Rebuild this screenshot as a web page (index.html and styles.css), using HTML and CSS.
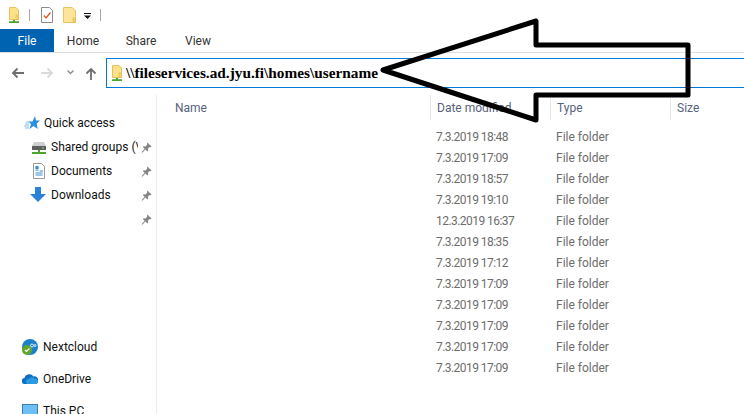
FILE: index.html
```html
<!DOCTYPE html>
<html lang="en">
<head>
<meta charset="utf-8">
<title>File Explorer</title>
<link rel="stylesheet" href="styles.css">
</head>
<body>
<svg width="0" height="0" class="defs">
  <defs>
    <symbol id="netfolder" viewBox="0 0 10 16">
      <path d="M.5 .5h6.500l2.500 2.500v9.500h-9z" fill="#fde188" stroke="#e3c25f"/>
      <rect x="7" y="8" width="2.500" height="4.500" fill="#f7d56c" stroke="#dcb64d" stroke-width=".6"/>
      <path d="M4 13h2v1.300h4V16H0v-1.700h4z" fill="#4aa52e"/>
    </symbol>
    <symbol id="pin" viewBox="0 0 12 12">
      <path d="M7 .5l4.500 4.500-1 .7-1-.3-2 2 .3 2-1 .9-2-2-3.300 3.500-.8-.8L4 7.500l-2-2 .9-1 2 .3 2-2-.3-1z" fill="#858585"/>
    </symbol>
  </defs>
</svg>
<div class="window">
  <div class="qat">
    <svg class="qat-net"><use href="#netfolder"/></svg>
    <span class="qat-sep"></span>
    <svg class="qat-doc" viewBox="0 0 12 16">
      <path d="M.5.500h8l3 3v12H.5z" fill="#fff" stroke="#8c8c8c"/>
      <path d="M3 8.500l2 2.500L9.500 5.500" fill="none" stroke="#e0562a" stroke-width="1.300"/>
    </svg>
    <svg class="qat-folder" viewBox="0 0 13 16">
      <path d="M.5.500h8.500l3.500 3v12H.5z" fill="#fde49a" stroke="#e6c563"/>
      <rect x="10" y="11" width="2.500" height="4.500" fill="#f4d06a" stroke="#dcb64d" stroke-width=".6"/>
    </svg>
    <svg class="qat-drop" viewBox="0 0 7 6">
      <rect width="7" height="1" fill="#111"/>
      <path d="M0 2.500h7L3.500 6z" fill="#111"/>
    </svg>
    <span class="qat-sep qat-sep-last"></span>
  </div>
  <div class="ribbon">
    <span class="tab tab-file">File</span>
    <span class="tab tab-home">Home</span>
    <span class="tab tab-share">Share</span>
    <span class="tab tab-view">View</span>
  </div>
  <div class="navbar">
    <svg class="nav-icon nav-back" viewBox="0 0 13 12"><path d="M13 6H2M6.500 1.500L2 6l4.500 4.500" fill="none" stroke="#6e6e6e" stroke-width="1.800"/></svg>
    <svg class="nav-icon nav-fwd" viewBox="0 0 13 12"><path d="M0 6h11M6.500 1.500L11 6l-4.500 4.500" fill="none" stroke="#d9d9d9" stroke-width="1.800"/></svg>
    <svg class="nav-chev" viewBox="0 0 7 5"><path d="M.5 .5L3.500 3.500 6.500 .5" fill="none" stroke="#8a8a8a" stroke-width="1.300"/></svg>
    <svg class="nav-icon nav-up" viewBox="0 0 12 13"><path d="M6 13V2M1.500 6.500L6 2l4.500 4.500" fill="none" stroke="#6e6e6e" stroke-width="1.800"/></svg>
    <div class="address">
      <svg class="addr-icon"><use href="#netfolder"/></svg>
      <span class="addr-text">\\fileservices.ad.jyu.fi\homes\username</span>
    </div>
  </div>
  <div class="content">
    <nav class="sidebar">
      <div class="nav-group">
        <div class="nav-item nav-top">
          <svg class="ico-star" viewBox="0 0 16 14">
            <path d="M11 0l1 4.500h4l-3.300 3 1 5.500-4.200-3L5.500 13l1.500-5L4.500 5.500h4z" fill="#2a8fdc"/>
            <path d="M0 10h5M1 8h4M2 6h3M1 12h4" stroke="#7fbdea" stroke-width="1"/>
          </svg>
          <span>Quick access</span>
        </div>
        <div class="nav-item nav-sub">
          <svg class="ico-sub" viewBox="0 0 16 16">
            <path d="M3 3h10l2 4v3H1V7z" fill="#cfcfcf"/>
            <rect x="1" y="7" width="14" height="4" fill="#5e5e5e"/>
            <rect x="11" y="8.500" width="2" height="1" fill="#7ee06a"/>
            <path d="M7 11h2v2h6v2H1v-2h6z" fill="#4aa52e"/>
          </svg>
          <span>Shared groups (\</span>
          <svg class="pin"><use href="#pin"/></svg>
        </div>
        <div class="nav-item nav-sub">
          <svg class="ico-sub" viewBox="0 0 16 16">
            <path d="M2.500.5h8l3 3v12h-11z" fill="#fff" stroke="#9a9a9a"/>
            <path d="M4.500 5h3M4.500 7h3M8.500 8h3.500M4.500 10h7M4.500 12h7" stroke="#3a8fd0"/>
            <rect x="4.500" y="3" width="3" height="3" fill="#3a8fd0"/>
          </svg>
          <span>Documents</span>
          <svg class="pin"><use href="#pin"/></svg>
        </div>
        <div class="nav-item nav-sub">
          <svg class="ico-sub ico-down" viewBox="0 0 16 16">
            <path d="M5 0h6v7h5l-8 8-8-8h5z" fill="#2b82d9"/>
          </svg>
          <span>Downloads</span>
          <svg class="pin"><use href="#pin"/></svg>
        </div>
        <div class="nav-item nav-sub">
          <span class="ico-sub"></span>
          <span></span>
          <svg class="pin"><use href="#pin"/></svg>
        </div>
      </div>
      <div class="nav-group-low">
        <div class="nav-item nav-low">
          <svg class="ico-low" viewBox="0 0 16 16">
            <circle cx="8" cy="8" r="8" fill="#1b82c9"/>
            <circle cx="5" cy="11" r="5" fill="#62a52c"/>
            <path d="M3 11l1.500 1.500L7.500 9.500" fill="none" stroke="#fff" stroke-width="1.200"/>
            <circle cx="10" cy="6.500" r="1.500" fill="none" stroke="#d6eefc"/>
            <circle cx="13" cy="6.500" r="1" fill="none" stroke="#d6eefc"/>
          </svg>
          <span>Nextcloud</span>
        </div>
        <div class="nav-item nav-low">
          <svg class="ico-low" viewBox="0 0 16 16">
            <path d="M3 13a3 3 0 0 1-.500-6 5 5 0 0 1 9-1.500A3.600 3.600 0 0 1 16 10c0 1.700-1 3-2.500 3z" fill="#0f6fc0"/>
            <path d="M6 13a2.500 2.500 0 0 1 .5-5 4 4 0 0 1 6-.5A3 3 0 0 1 16 10.500c0 1.500-1 2.500-2.500 2.500z" fill="#2a9be0"/>
          </svg>
          <span>OneDrive</span>
        </div>
        <div class="nav-item nav-low">
          <svg class="ico-low" viewBox="0 0 16 16">
            <rect x=".5" y="1.500" width="15" height="11" fill="#6cc0f5" stroke="#3f7fae"/>
          </svg>
          <span>This PC</span>
        </div>
      </div>
    </nav>
    <main class="files">
      <div class="row header">
        <span class="col-name">Name</span>
        <span class="col">Date modified</span>
        <span class="col">Type</span>
        <span class="col">Size</span>
      </div>
      <div class="row"><span></span><span class="cell date">7.3.2019 18:48</span><span class="cell">File folder</span></div>
      <div class="row"><span></span><span class="cell date">7.3.2019 17:09</span><span class="cell">File folder</span></div>
      <div class="row"><span></span><span class="cell date">7.3.2019 18:57</span><span class="cell">File folder</span></div>
      <div class="row"><span></span><span class="cell date">7.3.2019 19:10</span><span class="cell">File folder</span></div>
      <div class="row"><span></span><span class="cell date">12.3.2019 16:37</span><span class="cell">File folder</span></div>
      <div class="row"><span></span><span class="cell date">7.3.2019 18:35</span><span class="cell">File folder</span></div>
      <div class="row"><span></span><span class="cell date">7.3.2019 17:12</span><span class="cell">File folder</span></div>
      <div class="row"><span></span><span class="cell date">7.3.2019 17:09</span><span class="cell">File folder</span></div>
      <div class="row"><span></span><span class="cell date">7.3.2019 17:09</span><span class="cell">File folder</span></div>
      <div class="row"><span></span><span class="cell date">7.3.2019 17:09</span><span class="cell">File folder</span></div>
      <div class="row"><span></span><span class="cell date">7.3.2019 17:09</span><span class="cell">File folder</span></div>
      <div class="row"><span></span><span class="cell date">7.3.2019 17:09</span><span class="cell">File folder</span></div>
    </main>
  </div>
  <svg class="arrow" viewBox="0 0 744 414">
    <path d="M383 70L536 21V45H688V95H536V120Z" fill="none" stroke="#000" stroke-width="5" stroke-linejoin="round"/>
  </svg>
</div>
</body>
</html>
```

FILE: styles.css
```css
* { box-sizing: border-box; }
html, body { margin: 0; padding: 0; height: 100%; overflow: hidden; background: #fff; }
body { font-family: Roboto, "Open Sans", sans-serif; font-size: 12px; color: #1a1a1a; }
.defs { position: absolute; }
.window { position: relative; width: 744px; height: 414px; overflow: hidden; display: flex; flex-direction: column; }

.qat { height: 29px; display: flex; align-items: center; padding-left: 9px; }
.qat-net { width: 10px; height: 16px; }
.qat-sep { width: 1px; height: 12px; background: #a8a8a8; margin-left: 10px; }
.qat-doc { width: 12px; height: 16px; margin-left: 11px; }
.qat-folder { width: 13px; height: 16px; margin-left: 10px; }
.qat-drop { width: 7px; height: 6px; margin-left: 8px; margin-top: 2px; }
.qat-sep-last { margin-left: 9px; }

.ribbon { height: 24px; display: flex; border-bottom: 1px solid #dcdcdc; }
.tab { display: flex; align-items: center; justify-content: center; color: #333; }
.tab-file { width: 54px; height: 23px; background: #0063b1; color: #fff; }
.tab-home { width: 58px; }
.tab-share { width: 58px; }
.tab-view { width: 56px; }

.navbar { height: 40px; display: flex; align-items: center; }
.nav-icon { display: block; flex: none; }
.nav-back { width: 13px; height: 12px; margin-left: 11px; }
.nav-fwd { width: 13px; height: 12px; margin-left: 17px; }
.nav-chev { width: 7px; height: 5px; margin-left: 13px; margin-top: -2px; flex: none; }
.nav-up { width: 12px; height: 13px; margin-left: 11px; }
.address { flex: 1; height: 30px; margin-left: 9px; border: 1px solid #0078d7; border-right: 0; display: flex; align-items: center; padding-left: 5px; }
.addr-icon { width: 10px; height: 16px; flex: none; }
.addr-text { margin-left: 4px; font-family: "Liberation Serif", serif; font-weight: bold; font-size: 15.3px; color: #000; white-space: nowrap; }

.content { flex: 1; display: flex; min-height: 0; }
.sidebar { width: 157px; flex: none; margin-top: 2px; border-right: 1px solid #ececec; display: flex; flex-direction: column; padding-top: 16px; }
.nav-group { display: flex; flex-direction: column; }
.nav-group-low { display: flex; flex-direction: column; margin-top: 100px; }
.nav-item { display: flex; align-items: center; height: 24px; white-space: nowrap; color: #111; }
.nav-top { padding-left: 24px; }
.ico-star { width: 16px; height: 14px; margin-right: 4px; flex: none; }
.nav-sub { padding-left: 31px; }
.ico-sub { width: 16px; height: 16px; margin-right: 4px; flex: none; display: block; }
.nav-sub > span:nth-child(2) { width: 87px; overflow: hidden; }
.pin { width: 11px; height: 11px; margin-left: 3px; flex: none; }
.ico-down { margin-left: -1px; margin-right: 5px; }
.nav-low { height: 32px; padding-left: 22px; }
.ico-low { width: 16px; height: 16px; margin-right: 5px; flex: none; }

.files { flex: 1; display: flex; flex-direction: column; min-width: 0; padding-top: 2px; color: #6d6d6d; }
.row { display: grid; grid-template-columns: 273px 120px 120px 1fr; height: 21px; flex: none; align-items: center; }
.header { height: 25px; margin-bottom: 6px; color: #56627c; }
.header > span { height: 100%; display: flex; align-items: center; }
.col-name { padding-left: 18px; }
.col { border-left: 1px solid #e6e6e6; padding-left: 6px; }
.cell { padding-left: 6px; color: #6d6d6d; white-space: nowrap; }
.date { letter-spacing: -.55px; }

.arrow { position: absolute; left: 0; top: 0; width: 744px; height: 414px; pointer-events: none; }
```
